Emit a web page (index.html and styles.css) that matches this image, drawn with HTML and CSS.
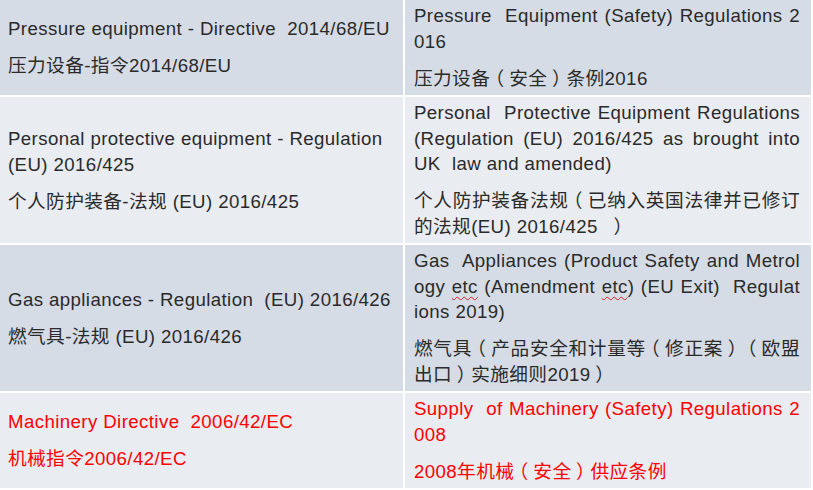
FILE: index.html
```html
<!DOCTYPE html>
<html lang="zh-CN">
<head>
<meta charset="utf-8">
<title>EU / UK regulations</title>
<link rel="stylesheet" href="styles.css">
</head>
<body>
<table class="regs">
  <colgroup><col class="col-eu"><col class="col-uk"></colgroup>
  <tr class="band-dark">
    <td class="eu">
      <p>Pressure equipment - Directive&nbsp; 2014/68/EU</p>
      <p>压力设备-指令2014/68/EU</p>
    </td>
    <td class="uk">
      <p><span class="ln">Pressure&nbsp; Equipment (Safety) Regulations 2</span><span class="ln">016</span></p>
      <p><span class="ln">压力设备<span class="fp">（</span>安全<span class="fp">）</span>条例2016</span></p>
    </td>
  </tr>
  <tr class="band-light">
    <td class="eu">
      <p>Personal protective equipment - Regulation<br>(EU) 2016/425</p>
      <p>个人防护装备-法规 (EU) 2016/425</p>
    </td>
    <td class="uk">
      <p><span class="ln">Personal&nbsp; Protective Equipment Regulations</span><span class="ln">(Regulation (EU) 2016/425 as brought into</span><span class="ln">UK&nbsp; law and amended)</span></p>
      <p><span class="ln">个人防护装备法规<span class="fp">（</span>已纳入英国法律并已修订</span><span class="ln">的法规(EU) 2016/425&nbsp; <span class="fp">）</span></span></p>
    </td>
  </tr>
  <tr class="band-dark">
    <td class="eu">
      <p>Gas appliances - Regulation&nbsp; (EU) 2016/426</p>
      <p>燃气具-法规 (EU) 2016/426</p>
    </td>
    <td class="uk">
      <p><span class="ln">Gas&nbsp; Appliances (Product Safety and Metrol</span><span class="ln">ogy <span class="spell">etc</span> (Amendment <span class="spell">etc</span>) (EU Exit)&nbsp; Regulat</span><span class="ln">ions 2019)</span></p>
      <p><span class="ln">燃气具<span class="fp">（</span>产品安全和计量等<span class="fp">（</span>修正案<span class="fp">）</span><span class="fp">（</span>欧盟</span><span class="ln">出口<span class="fp">）</span>实施细则2019<span class="fp">）</span></span></p>
    </td>
  </tr>
  <tr class="band-light alert">
    <td class="eu">
      <p>Machinery Directive&nbsp; 2006/42/EC</p>
      <p>机械指令2006/42/EC</p>
    </td>
    <td class="uk">
      <p><span class="ln">Supply&nbsp; of Machinery (Safety) Regulations 2</span><span class="ln">008</span></p>
      <p><span class="ln">2008年机械<span class="fp">（</span>安全<span class="fp">）</span>供应条例</span></p>
    </td>
  </tr>
</table>
</body>
</html>
```
FILE: styles.css
```css
html, body {
  margin: 0;
  padding: 0;
  background: #ffffff;
  overflow: hidden;
}

.regs {
  width: 813px;
  table-layout: fixed;
  border-collapse: separate;
  border-spacing: 0;
  font-family: "Liberation Sans", Arial, "Noto Sans CJK SC", sans-serif;
  font-size: 18.67px;
  letter-spacing: 0.4px;
  line-height: 25.5px;
  color: #2a2a2a;
}

.col-eu { width: 405px; }
.col-uk { width: 408px; }

.regs td {
  border-right: 2px solid #ffffff;
  border-bottom: 2px solid #ffffff;
}

.band-dark td { background: #d6dce5; }
.band-light td { background: #e9ecf1; }

.alert td { color: #ff0000; }

.eu {
  vertical-align: middle;
  padding: 4px 6px 4px 8px;
}

.uk {
  vertical-align: middle;
  padding: 3px 11px 4px 9px;
  text-align: justify;
}

.regs p {
  margin: 0 0 11.5px;
}

.regs p:last-child {
  margin-bottom: 0;
}

.ln {
  display: block;
  text-align: justify;
  text-align-last: justify;
}

.ln:last-child {
  text-align-last: left;
}

/* full-width brackets drawn centred in their em box */
.fp {
  font-feature-settings: "halt" 1;
  padding: 0 0.25em;
}

.spell {
  text-decoration: underline wavy #e02020;
  text-decoration-thickness: 1px;
  text-underline-offset: 3px;
  text-decoration-skip-ink: none;
}
```
